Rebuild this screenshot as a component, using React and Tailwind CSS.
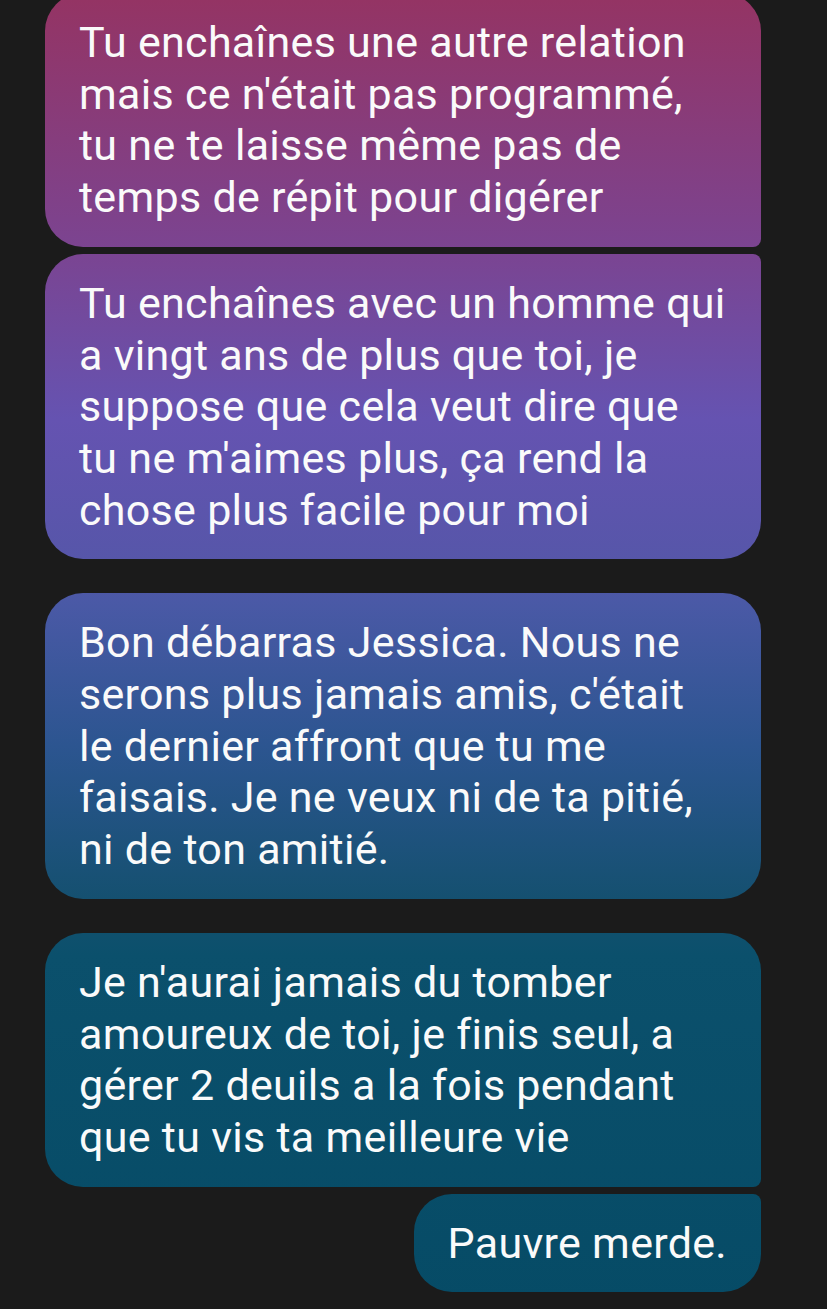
const messages = [
  {
    id: 1,
    lines: [
      'Tu enchaînes une autre relation',
      "mais ce n'était pas programmé,",
      'tu ne te laisse même pas de',
      'temps de répit pour digérer',
    ],
    corners: 'rounded-[38px] rounded-br-[8px]',
    gap: '',
  },
  {
    id: 2,
    lines: [
      'Tu enchaînes avec un homme qui',
      'a vingt ans de plus que toi, je',
      'suppose que cela veut dire que',
      "tu ne m'aimes plus, ça rend la",
      'chose plus facile pour moi',
    ],
    corners: 'rounded-[38px] rounded-tr-[8px]',
    gap: 'mt-[7px]',
  },
  {
    id: 3,
    lines: [
      'Bon débarras Jessica. Nous ne',
      "serons plus jamais amis, c'était",
      'le dernier affront que tu me',
      'faisais. Je ne veux ni de ta pitié,',
      'ni de ton amitié.',
    ],
    corners: 'rounded-[38px]',
    gap: 'mt-[34px]',
  },
  {
    id: 4,
    lines: [
      'Je n\'aurai jamais du tomber',
      'amoureux de toi, je finis seul, a',
      'gérer 2 deuils a la fois pendant',
      'que tu vis ta meilleure vie',
    ],
    corners: 'rounded-[38px] rounded-br-[8px]',
    gap: 'mt-[34px]',
  },
  {
    id: 5,
    lines: ['Pauvre merde.'],
    corners: 'rounded-[38px] rounded-tr-[8px]',
    gap: 'mt-[7px]',
  },
]

function Bubble({ message }) {
  const wide = message.lines.length > 1
  return (
    <div
      className={`${wide ? 'w-[716px]' : ''} px-[34px] pt-[24px] pb-[23px] text-[43px] tracking-[0.3px] leading-[51.7px] text-[#fafafa] bg-fixed bg-[linear-gradient(to_bottom,#943464_0%,#7b4491_19%,#6553b1_32%,#5656a9_43%,#4a59a6_46%,#2c5590_57%,#14506f_69%,#0b506c_73%,#064b66_100%)] ${message.corners} ${message.gap}`}
    >
      {message.lines.map((line, i) => (
        <div key={i} className="whitespace-nowrap">
          {line}
        </div>
      ))}
    </div>
  )
}

export default function App() {
  return (
    <div className="h-[1309px] overflow-hidden bg-[#1b1b1b] font-['Roboto',sans-serif]">
      <div className="flex flex-col items-end pr-[66px] -mt-[7px]">
        {messages.map((message) => (
          <Bubble key={message.id} message={message} />
        ))}
      </div>
    </div>
  )
}
